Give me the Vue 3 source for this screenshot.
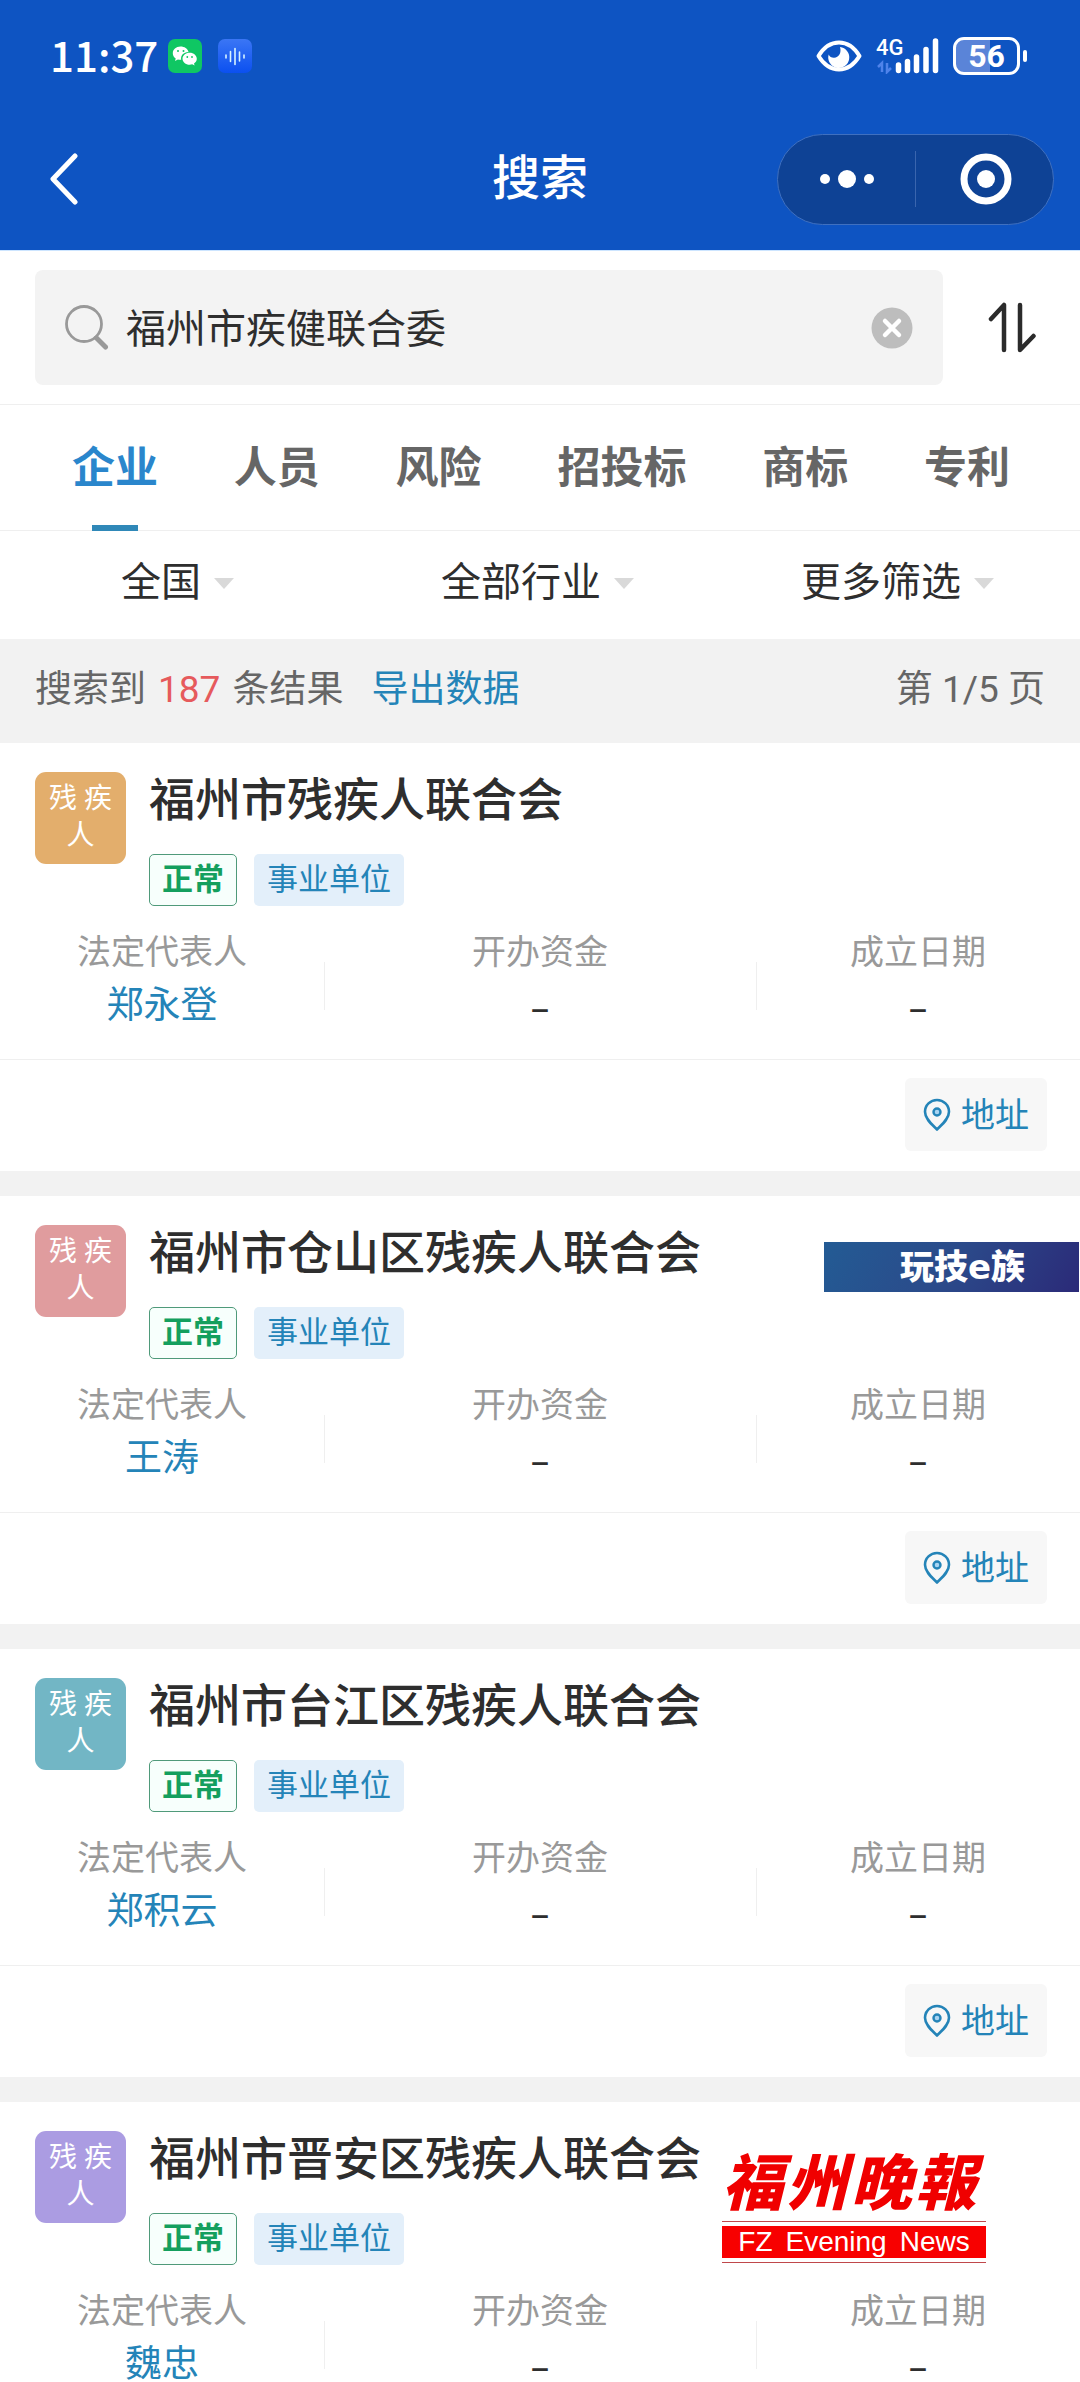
<script setup>
import { ref } from 'vue'

const keyword = ref('福州市疾健联合委')
const activeTab = ref('企业')
const total = ref(187)
const page = ref(1)
const pageCount = ref(5)

const tabs = ['企业', '人员', '风险', '招投标', '商标', '专利']
const filters = ['全国', '全部行业', '更多筛选']

const companies = [
  { name: '福州市残疾人联合会', person: '郑永登', color: '#e3ae6c' },
  { name: '福州市仓山区残疾人联合会', person: '王涛', color: '#e09c9e', banner: 'tech' },
  { name: '福州市台江区残疾人联合会', person: '郑积云', color: '#72b6c5' },
  { name: '福州市晋安区残疾人联合会', person: '魏忠', color: '#ab9ce2', banner: 'news' },
]
</script>

<template>
  <div class="page">
    <header class="header">
      <div class="status-bar">
        <span class="time">11:37</span>
        <svg class="app-icon" viewBox="0 0 34 34">
          <rect width="34" height="34" rx="7" fill="#0fc763" />
          <path d="M12.500 7.500C8 7.500 4.800 10.500 4.800 14.200c0 2.200 1.100 4 2.900 5.200l-.7 2.500 2.900-1.500c1 .3 2.200.4 3.300.3-.8-4.300 2.300-7.700 7.300-7.800-.7-3.200-4.100-5.400-8-5.400z" fill="#fff" />
          <path d="M21.700 13.700c-4.100 0-7.200 2.700-7.200 6s3.100 6 7.200 6c.9 0 1.700-.1 2.500-.4l2.400 1.300-.6-2.200c1.700-1.100 2.800-2.800 2.800-4.700 0-3.300-3.100-6-7.100-6z" fill="#fff" />
          <g fill="#0fc763">
            <circle cx="10" cy="12" r="1" /><circle cx="15.500" cy="12" r="1" />
            <circle cx="19.300" cy="18" r=".9" /><circle cx="24" cy="18" r=".9" />
          </g>
        </svg>
        <svg class="app-icon voice" viewBox="0 0 34 34">
          <defs>
            <linearGradient id="voiceBg" x1="0" y1="0" x2="0" y2="1">
              <stop offset="0" stop-color="#3b76f5" />
              <stop offset="1" stop-color="#0b50f0" />
            </linearGradient>
          </defs>
          <rect width="34" height="34" rx="7" fill="url(#voiceBg)" />
          <path d="M8 16v3M12.500 12.500v10M17 9.500v16M21.500 13v9M26 16v3" stroke="#d8f4ff" stroke-width="1.600" stroke-linecap="round" />
        </svg>
        <svg class="eye" viewBox="0 0 46 32">
          <path d="M2.500 16C8 7 15 2.500 23 2.500S38 7 43.500 16C38 25 31 29.500 23 29.500S8 25 2.500 16z" fill="none" stroke="#fff" stroke-width="4" stroke-linejoin="round" />
          <path d="M24 7a10.500 10.500 0 1 1-11.300 7.500c1 2.200 3 3.500 5.500 3.300 4.500-.3 7.600-5 5.800-10.800z" fill="#fff" />
        </svg>
        <div class="network">
          <span class="net-type">4G</span>
          <svg class="signal" viewBox="0 0 64 36">
            <path d="M2 29l4-4v9M11 25v9l4-4" fill="none" stroke="#4f83ea" stroke-width="2.500" />
            <path d="M22.500 27v5.500M31.500 23.500v9M40.500 19v13.500M50 11.500v21M59.500 3v29.500" stroke="#fff" stroke-width="5.500" stroke-linecap="round" />
          </svg>
        </div>
        <div class="battery"><span class="level">56</span></div>
      </div>
      <div class="nav">
        <button type="button" class="btn-back" aria-label="返回">
          <svg viewBox="0 0 28 52">
            <path d="M25 3L3 26l22 23" fill="none" stroke="#fff" stroke-width="5" stroke-linecap="round" stroke-linejoin="round" />
          </svg>
        </button>
        <h1 class="title">搜索</h1>
        <div class="capsule">
          <button type="button" class="capsule-btn" aria-label="更多">
            <svg viewBox="0 0 56 20" width="56" height="20" fill="#fff">
              <circle cx="6" cy="10" r="5" /><circle cx="28" cy="10" r="9" /><circle cx="50" cy="10" r="5" />
            </svg>
          </button>
          <button type="button" class="capsule-btn" aria-label="关闭">
            <svg viewBox="0 0 52 52" width="52" height="52">
              <circle cx="26" cy="26" r="22" fill="none" stroke="#fff" stroke-width="7" />
              <circle cx="26" cy="26" r="9" fill="#fff" />
            </svg>
          </button>
        </div>
      </div>
    </header>

    <div class="search-row">
      <div class="search-box">
        <svg class="icon-search" viewBox="0 0 44 46">
          <circle cx="19" cy="19" r="17.500" fill="none" stroke="#999" stroke-width="2.800" />
          <path d="M31.500 33l9 9" stroke="#999" stroke-width="5" stroke-linecap="round" />
        </svg>
        <input v-model="keyword" type="text" class="search-input" aria-label="搜索" />
        <button type="button" class="btn-clear" aria-label="清空" @click="keyword = ''">
          <svg viewBox="0 0 42 42">
            <circle cx="21" cy="21" r="20.500" fill="#bdbdbd" />
            <path d="M14 14l14 14M28 14L14 28" stroke="#fff" stroke-width="4.500" stroke-linecap="round" />
          </svg>
        </button>
      </div>
      <button type="button" class="btn-sort" aria-label="排序">
        <svg viewBox="0 0 48 52">
          <path d="M3 17L16 3v45M32 3v45l13.500-14" fill="none" stroke="#2b2b2b" stroke-width="4.500" stroke-linecap="round" stroke-linejoin="round" />
        </svg>
      </button>
    </div>

    <nav class="tabs">
      <button
        v-for="tab in tabs"
        :key="tab"
        type="button"
        class="tab"
        :class="{ active: tab === activeTab }"
        @click="activeTab = tab"
      >{{ tab }}</button>
    </nav>

    <div class="filters">
      <label v-for="item in filters" :key="item" class="filter">
        <select class="filter-select" :aria-label="item">
          <option>{{ item }}</option>
        </select>
        <i class="arrow"></i>
      </label>
    </div>

    <div class="summary">
      <span>搜索到<em class="total">{{ total }}</em>条结果</span>
      <a href="#" class="export">导出数据</a>
      <span class="pager">第 {{ page }}/{{ pageCount }} 页</span>
    </div>

    <main class="list">
      <article v-for="item in companies" :key="item.name" class="card">
        <div class="card-head">
          <div class="avatar" :style="{ background: item.color }">残 疾<br />人</div>
          <div>
            <h2 class="name">{{ item.name }}</h2>
            <div class="tags">
              <span class="tag status">正常</span>
              <span class="tag type">事业单位</span>
            </div>
          </div>
        </div>
        <dl class="info">
          <div class="info-item">
            <dt>法定代表人</dt>
            <dd><a href="#" class="person">{{ item.person }}</a></dd>
          </div>
          <div class="info-item">
            <dt>开办资金</dt>
            <dd class="empty">–</dd>
          </div>
          <div class="info-item">
            <dt>成立日期</dt>
            <dd class="empty">–</dd>
          </div>
        </dl>
        <div class="card-foot">
          <button type="button" class="btn-address">
            <svg class="icon-pin" viewBox="0 0 28 34">
              <path d="M14 2C7.400 2 2 7.200 2 13.800 2 21 9 26.500 14 31.500c5-5 12-10.500 12-17.700C26 7.200 20.600 2 14 2z" fill="none" stroke="#2484b8" stroke-width="2.600" stroke-linejoin="round" />
              <circle cx="14" cy="14" r="3.500" fill="#a9d4f2" stroke="#2484b8" stroke-width="2.400" />
            </svg>
            地址
          </button>
        </div>

        <div v-if="item.banner === 'tech'" class="banner-tech">玩技<small>e</small>族</div>
        <div v-if="item.banner === 'news'" class="banner-news">
          <div class="news-cn"><span>福</span><span>州</span><span>晚</span><span>報</span></div>
          <div class="news-en"><span>FZ</span><span>Evening</span><span>News</span></div>
        </div>
      </article>
    </main>
  </div>
</template>

<style>
body {
  margin: 0;
}
</style>

<style scoped>
.page {
  display: flex;
  flex-direction: column;
  height: 100vh;
  overflow: hidden;
  background: #fff;
  color: #2e2e2e;
  font-family: Roboto, "Noto Sans CJK SC", sans-serif;
}

button,
input,
select {
  margin: 0;
  padding: 0;
  border: 0;
  background: none;
  color: inherit;
  font: inherit;
  outline: none;
}

a {
  color: #2484b8;
  text-decoration: none;
}

svg {
  display: block;
}

.header {
  flex: none;
  padding-bottom: 4px;
  border-bottom: 1px solid #cde5ff;
  background: #0e54c2;
  color: #fff;
}

.status-bar {
  display: flex;
  align-items: center;
  height: 112px;
  padding: 0 60px 0 50px;
}

.time {
  padding-bottom: 4px;
  font-family: "Noto Sans CJK SC", sans-serif;
  font-size: 42px;
  font-weight: 500;
  line-height: 56px;
}

.app-icon {
  width: 34px;
  height: 34px;
  margin-left: 10px;
}

.app-icon.voice {
  margin-left: 16px;
}

.eye {
  width: 46px;
  height: 32px;
  margin-left: auto;
}

.network {
  position: relative;
  margin-left: 14px;
}

.net-type {
  position: absolute;
  top: -3px;
  left: 0;
  font-size: 22px;
  font-weight: 500;
  line-height: 26px;
}

.signal {
  width: 64px;
  height: 36px;
}

.battery {
  position: relative;
  box-sizing: border-box;
  width: 67px;
  height: 38px;
  margin-left: 13px;
  border: 3px solid #fff;
  border-radius: 11px;
  background: linear-gradient(90deg, #5a84d8 56%, transparent 56%);
  text-align: center;
}

.battery::after {
  content: '';
  position: absolute;
  top: 10px;
  right: -10px;
  width: 4px;
  height: 12px;
  border-radius: 2px;
  background: #fff;
}

.level {
  display: block;
  font-size: 32px;
  font-weight: 700;
  line-height: 32px;
}

.nav {
  display: grid;
  grid-template-columns: 1fr auto 1fr;
  align-items: center;
  height: 134px;
  padding: 0 26px 0 50px;
}

.btn-back {
  width: 28px;
  height: 52px;
}

.title {
  margin: 0;
  padding-right: 24px;
  font-size: 48px;
  font-weight: 500;
  line-height: 60px;
}

.capsule {
  display: flex;
  justify-self: end;
  box-sizing: border-box;
  width: 277px;
  height: 91px;
  border: 1px solid #3f70c0;
  border-radius: 46px;
  background: #0e4295;
}

.capsule-btn {
  display: flex;
  flex: 1;
  align-items: center;
  justify-content: center;
}

.capsule-btn + .capsule-btn::before {
  content: '';
  width: 1px;
  height: 56px;
  margin-right: 44px;
  margin-left: -42px;
  background: #3a65ae;
}

.search-row {
  display: flex;
  flex: none;
  align-items: center;
  gap: 45px;
  padding: 19px 44px 19px 35px;
  border-bottom: 1px solid #efefef;
}

.search-box {
  display: flex;
  flex: 1;
  align-items: center;
  height: 115px;
  padding: 0 30px;
  border-radius: 8px;
  background: #f3f3f3;
}

.icon-search {
  width: 44px;
  height: 46px;
}

.search-input {
  flex: 1;
  min-width: 0;
  height: 60px;
  margin-left: 17px;
  padding-bottom: 4px;
  font-size: 40px;
}

.btn-clear {
  width: 42px;
  height: 42px;
}

.btn-sort {
  width: 48px;
  height: 52px;
}

.tabs {
  display: flex;
  flex: none;
  justify-content: space-between;
  height: 125px;
  padding: 0 70px 0 72px;
  border-bottom: 1px solid #efefef;
}

.tab {
  position: relative;
  color: #666;
  font-size: 43px;
  font-weight: 700;
  line-height: 60px;
}

.tab.active {
  color: #2a86cc;
}

.tab.active::after {
  content: '';
  position: absolute;
  bottom: -1px;
  left: 50%;
  width: 46px;
  height: 6px;
  margin-left: -23px;
  background: #2f88b8;
}

.filters {
  display: grid;
  flex: none;
  grid-template-columns: repeat(3, 1fr);
  height: 104px;
  padding-bottom: 4px;
}

.filter {
  display: flex;
  align-items: center;
  justify-content: center;
  gap: 13px;
  padding-right: 5px;
}

.filter-select {
  appearance: none;
  height: 60px;
  font-size: 40px;
  line-height: 60px;
}

.arrow {
  border: 10px solid transparent;
  border-top: 11px solid #d9d9d9;
  border-bottom: 0;
}

.summary {
  display: flex;
  flex: none;
  align-items: center;
  height: 102px;
  padding: 0 35px 2px;
  background: #f2f2f2;
  color: #666;
  font-size: 37px;
  line-height: 52px;
}

.total {
  margin: 0 12px;
  color: #e65a5c;
  font-style: normal;
}

.export {
  margin-left: 28px;
}

.pager {
  margin-left: auto;
}

.list {
  flex: 1;
  min-height: 0;
  overflow-y: auto;
  background: #f2f2f2;
  scrollbar-width: none;
}

.card {
  position: relative;
  margin-bottom: 25px;
  background: #fff;
}

.card-head {
  display: flex;
  gap: 23px;
  padding: 29px 35px 0;
}

.avatar {
  box-sizing: border-box;
  flex: none;
  width: 91px;
  height: 92px;
  padding-top: 8px;
  border-radius: 11px;
  color: #fff;
  font-size: 28px;
  line-height: 37px;
  text-align: center;
}

.name {
  margin: 0;
  font-size: 46px;
  font-weight: 500;
  line-height: 56px;
}

.tags {
  display: flex;
  gap: 17px;
  margin-top: 26px;
}

.tag {
  box-sizing: border-box;
  height: 52px;
  padding: 0 12px;
  border: 1px solid transparent;
  border-radius: 5px;
  font-size: 31px;
  line-height: 50px;
}

.tag.status {
  border-color: #4f9a7a;
  background: #f7fffc;
  color: #149f5e;
  font-weight: 700;
}

.tag.type {
  background: #e3effa;
  color: #2484b8;
}

.info {
  display: grid;
  grid-template-columns: 3fr 4fr 3fr;
  margin: 0;
  padding: 22px 0 23px;
  border-bottom: 1px solid #efefef;
  text-align: center;
}

.info-item {
  position: relative;
}

.info-item + .info-item::before {
  content: '';
  position: absolute;
  top: 34px;
  left: 0;
  width: 1px;
  height: 48px;
  background: #efefef;
}

dt {
  color: #999;
  font-size: 34px;
  line-height: 48px;
}

dd {
  margin: 0;
  font-size: 37px;
  line-height: 60px;
}

.empty {
  font-family: "Noto Sans", sans-serif;
}

.card-foot {
  display: flex;
  justify-content: flex-end;
  padding: 18px 33px 20px;
}

.btn-address {
  display: flex;
  align-items: center;
  gap: 10px;
  height: 73px;
  padding: 0 18px;
  border-radius: 6px;
  background: #f7f7f7;
  color: #2484b8;
  font-size: 34px;
  line-height: 48px;
}

.icon-pin {
  width: 28px;
  height: 34px;
}

.banner-tech {
  position: absolute;
  top: 46px;
  right: 1px;
  box-sizing: border-box;
  width: 255px;
  height: 50px;
  padding-left: 76px;
  background: linear-gradient(120deg, #235b94, #2b4a8a 50%, #2b2a78);
  color: #fff;
  font-size: 34px;
  font-weight: 900;
  line-height: 50px;
}

.banner-tech small {
  font-family: "DejaVu Sans", sans-serif;
  font-size: 34px;
}

.banner-news {
  position: absolute;
  top: 46px;
  right: 94px;
  width: 264px;
}

.news-cn {
  display: flex;
  justify-content: space-between;
  padding: 0 10px 0 0;
  color: #f00000;
  font-size: 61px;
  font-style: italic;
  font-weight: 900;
  line-height: 73px;
}

.news-en {
  display: flex;
  justify-content: center;
  gap: 13px;
  padding: 4px 0;
  border: solid #c0474b;
  border-width: 1px 0;
  background: #f80000 content-box;
  color: #fff;
  font-family: "Liberation Sans", sans-serif;
  font-size: 28px;
  line-height: 32px;
}
</style>
